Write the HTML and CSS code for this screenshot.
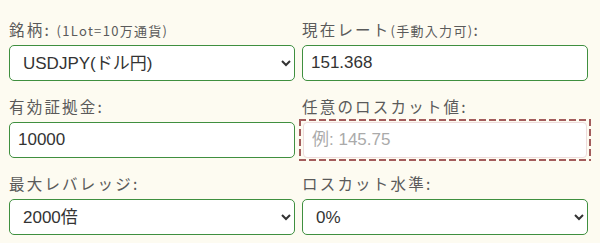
FILE: index.html
```html
<!DOCTYPE html>
<html lang="ja">
<head>
<meta charset="utf-8">
<title>ロスカット計算</title>
<link rel="stylesheet" href="styles.css">
</head>
<body>
<form class="calc">
  <div class="field">
    <label class="lbl" for="pair">銘柄: <small>(1Lot=10万通貨)</small></label>
    <select id="pair" class="ctl">
      <option>USDJPY(ドル円)</option>
    </select>
  </div>
  <div class="field">
    <label class="lbl" for="rate">現在レート<small>(手動入力可)</small>:</label>
    <input id="rate" class="ctl" type="text" value="151.368">
  </div>
  <div class="field">
    <label class="lbl" for="margin">有効証拠金:</label>
    <input id="margin" class="ctl" type="text" value="10000">
  </div>
  <div class="field">
    <label class="lbl" for="lc">任意のロスカット値:</label>
    <span class="dash-wrap">
      <input id="lc" class="ctl optional" type="text" placeholder="例: 145.75">
    </span>
  </div>
  <div class="field">
    <label class="lbl" for="lev">最大レバレッジ:</label>
    <select id="lev" class="ctl">
      <option>2000倍</option>
    </select>
  </div>
  <div class="field">
    <label class="lbl" for="lvl">ロスカット水準:</label>
    <select id="lvl" class="ctl">
      <option>0%</option>
    </select>
  </div>
</form>
</body>
</html>
```

FILE: styles.css
```css
html, body {
  margin: 0;
  padding: 0;
  background: #fdfbf1;
}
body {
  font-family: "Liberation Sans", "Noto Sans CJK JP", sans-serif;
  color: #333;
}
.calc {
  display: grid;
  grid-template-columns: 286px 286px;
  column-gap: 7px;
  row-gap: 15px;
  padding: 19px 0 0 9px;
}
.field {
  display: flex;
  flex-direction: column;
  gap: 6px;
}
.lbl {
  font-family: "Noto Sans CJK JP", sans-serif;
  font-size: 15.5px;
  line-height: 20px;
  height: 20px;
  color: #5a5a5a;
  letter-spacing: 2.2px;
  white-space: nowrap;
}
.lbl small {
  font-size: 13px;
  letter-spacing: 1.3px;
}
.ctl {
  box-sizing: border-box;
  width: 100%;
  height: 36px;
  margin: 0;
  border: 1.5px solid #3f8f3f;
  border-radius: 5px;
  background-color: #fff;
  font-family: "Liberation Sans", "Noto Sans CJK JP", sans-serif;
  font-size: 17px;
  color: #333;
  padding: 0 8px;
}
select.ctl {
  padding: 0 8px 0 9px;
}
.ctl::placeholder {
  color: #aaa;
}
.dash-wrap {
  position: relative;
  display: block;
  margin: 0 1px;
}
.dash-wrap::after {
  content: "";
  position: absolute;
  top: -3px;
  bottom: -3px;
  left: -4px;
  right: -4px;
  pointer-events: none;
  background:
    repeating-linear-gradient(90deg, #a35c5c 0 7px, transparent 7px 10px) top left / 100% 2px no-repeat,
    repeating-linear-gradient(90deg, #a35c5c 0 7px, transparent 7px 10px) bottom left / 100% 2px no-repeat,
    repeating-linear-gradient(180deg, #a35c5c 0 7px, transparent 7px 10px) top left / 2px 100% no-repeat,
    repeating-linear-gradient(180deg, #a35c5c 0 7px, transparent 7px 10px) top right / 2px 100% no-repeat;
}
.optional {
  display: block;
  border: 1px solid #eedcdc;
  border-radius: 4px;
}
.optional:focus {
  outline: none;
}
```
